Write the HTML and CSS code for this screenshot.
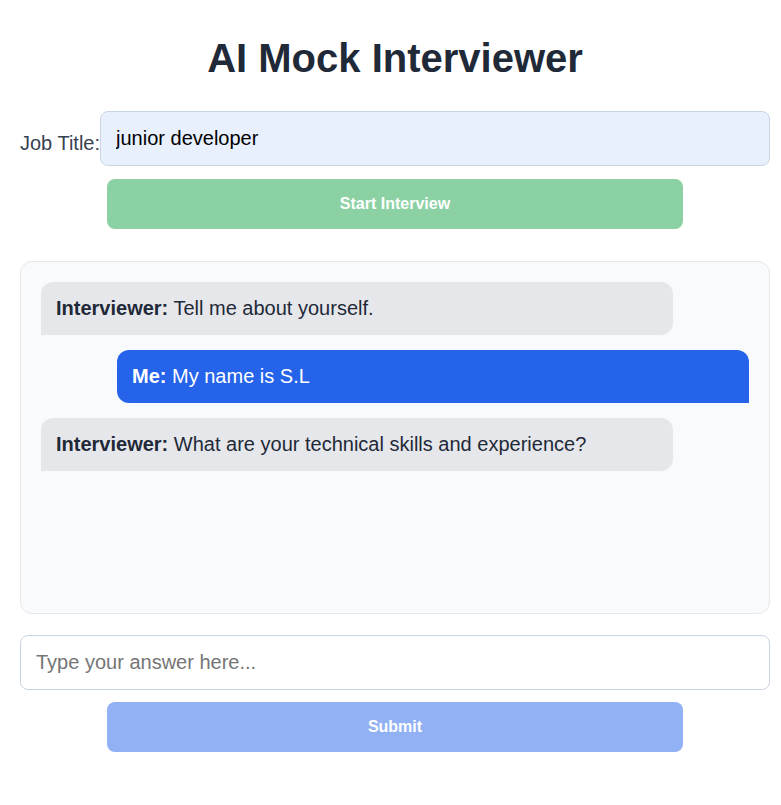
FILE: index.html
```html
<!DOCTYPE html>
<html lang="en">
<head>
<meta charset="utf-8">
<title>AI Mock Interviewer</title>
<link rel="stylesheet" href="styles.css">
</head>
<body>
<div class="app">
  <h1 class="title">AI Mock Interviewer</h1>
  <div class="job-row">
    <label class="job-label" for="job">Job Title:</label>
    <input class="job-input" id="job" type="text" value="junior developer">
  </div>
  <button class="btn btn-start" disabled>Start Interview</button>
  <div class="chat">
    <div class="msg msg-ai"><strong>Interviewer:</strong> Tell me about yourself.</div>
    <div class="msg msg-me"><strong>Me:</strong> My name is S.L</div>
    <div class="msg msg-ai"><strong>Interviewer:</strong> What are your technical skills and experience?</div>
  </div>
  <input class="answer-input" type="text" placeholder="Type your answer here...">
  <button class="btn btn-submit" disabled>Submit</button>
</div>
</body>
</html>
```
FILE: styles.css
```css
* { box-sizing: border-box; }
html, body { margin: 0; padding: 0; background: #ffffff; }
body {
  font-family: "Liberation Sans", Arial, sans-serif;
  color: #1f2937;
}
.app {
  width: 750px;
  margin-left: 20px;
  padding-top: 35px;
  display: flex;
  flex-direction: column;
}
.title {
  margin: 0;
  font-size: 40px;
  line-height: 46px;
  font-weight: 700;
  text-align: center;
  color: #1f2937;
}
.job-row {
  margin-top: 30px;
  display: flex;
  align-items: center;
}
.job-label {
  font-size: 20px;
  color: #374151;
  padding-top: 9px;
}
.job-input {
  flex: 1;
  height: 55px;
  padding: 0 15px;
  font-family: "Liberation Sans", Arial, sans-serif;
  font-size: 20px;
  color: #000000;
  background: #e8f0fe;
  border: 1px solid #cbd5e1;
  border-radius: 8px;
  outline: none;
}
.btn {
  align-self: center;
  width: 576px;
  height: 50px;
  border: none;
  border-radius: 8px;
  font-family: "Liberation Sans", Arial, sans-serif;
  font-size: 16px;
  font-weight: 700;
  color: #ffffff;
}
.btn-start {
  margin-top: 13px;
  background: #8bd1a4;
}
.chat {
  margin-top: 32px;
  height: 353px;
  padding: 20px;
  background: #f9fafb;
  border: 1px solid #e5e7eb;
  border-radius: 12px;
  display: flex;
  flex-direction: column;
  gap: 15px;
}
.msg {
  width: 632px;
  padding: 15px;
  font-size: 20px;
  line-height: 23px;
  border-radius: 12px;
}
.msg-ai {
  align-self: flex-start;
  background: #e5e7eb;
  color: #1f2937;
  border-bottom-left-radius: 0;
}
.msg-me {
  align-self: flex-end;
  background: #2563eb;
  color: #ffffff;
  border-bottom-right-radius: 0;
}
.answer-input {
  margin-top: 21px;
  height: 55px;
  padding: 0 15px;
  font-family: "Liberation Sans", Arial, sans-serif;
  font-size: 20px;
  color: #111827;
  background: #ffffff;
  border: 1px solid #cbd5e1;
  border-radius: 8px;
  outline: none;
}
.answer-input::placeholder { color: #757575; }
.btn-submit {
  margin-top: 12px;
  background: #92b1f5;
}
```
